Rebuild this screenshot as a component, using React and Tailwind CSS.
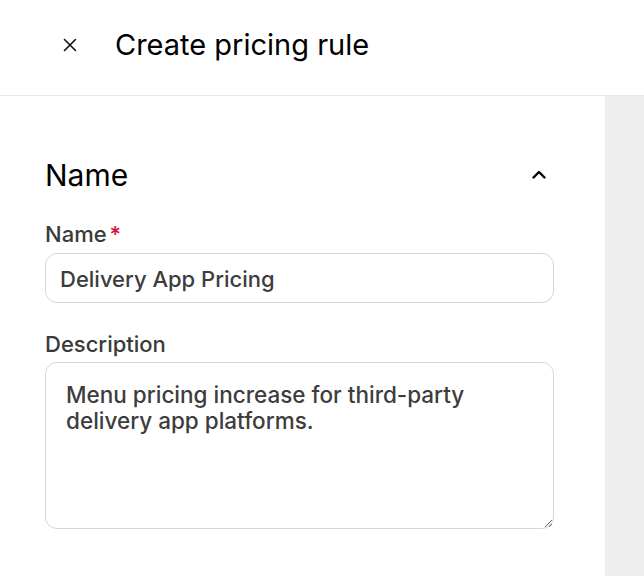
import React, { useState } from 'react';

const CloseIcon = () => (
  <svg width="16" height="16" viewBox="0 0 16 16" fill="none" stroke="currentColor" strokeWidth="1.6" strokeLinecap="round">
    <path d="M2.5 2.5l11 11M13.5 2.5l-11 11" />
  </svg>
);

const ChevronUp = () => (
  <svg width="18" height="18" viewBox="0 0 18 18" fill="none" stroke="currentColor" strokeWidth="2.4" strokeLinecap="round" strokeLinejoin="round">
    <path d="M3.5 11.5L9 6l5.5 5.5" />
  </svg>
);

export default function App() {
  const [name, setName] = useState('Delivery App Pricing');
  const [description, setDescription] = useState(
    'Menu pricing increase for third-party delivery app platforms.'
  );
  const [open, setOpen] = useState(true);

  return (
    <div className="flex h-[576px] w-[644px] flex-col overflow-hidden bg-white" style={{ fontFamily: 'Inter, "Noto Sans", sans-serif' }}>
      <header className="flex h-[96px] shrink-0 items-center border-b border-[#e8e8e8] pb-[6px]">
        <button type="button" className="ml-[62px] flex h-4 w-4 items-center justify-center text-[#111]">
          <CloseIcon />
        </button>
        <h1 className="ml-[37px] text-[29px] leading-[36px] text-black">Create pricing rule</h1>
      </header>

      <div className="flex flex-1">
        <main className="w-[605px] shrink-0 pl-[45px] pr-[51px] pt-[61px]">
          <div className="flex items-center justify-between">
            <h2 className="text-[30px] leading-[36px] text-black">Name</h2>
            <button type="button" onClick={() => setOpen(!open)} className="mr-[6px] text-black">
              <ChevronUp />
            </button>
          </div>

          {open && (
            <div className="mt-[27px]">
              <label className="mb-[5px] block text-[22px] font-medium leading-[28px] text-[#3a3a3a]">
                Name<span className="ml-[3px] text-[#d0103a]">*</span>
              </label>
              <input
                value={name}
                onChange={e => setName(e.target.value)}
                className="block h-[50px] w-full rounded-[12px] border border-[#d6d6d6] px-[14px] pt-[2px] text-[22px] font-medium text-[#3d3d3d] outline-none"
              />

              <label className="mb-[4px] mt-[27px] block text-[22px] font-medium leading-[28px] text-[#3a3a3a]">
                Description
              </label>
              <textarea
                value={description}
                onChange={e => setDescription(e.target.value)}
                className="block h-[167px] w-full rounded-[12px] border border-[#d6d6d6] px-[20px] pt-[19px] text-[22.5px] font-medium leading-[26px] text-[#3d3d3d] outline-none"
              />
            </div>
          )}
        </main>
        <aside className="flex-1 bg-[#eeeeee]" />
      </div>
    </div>
  );
}
